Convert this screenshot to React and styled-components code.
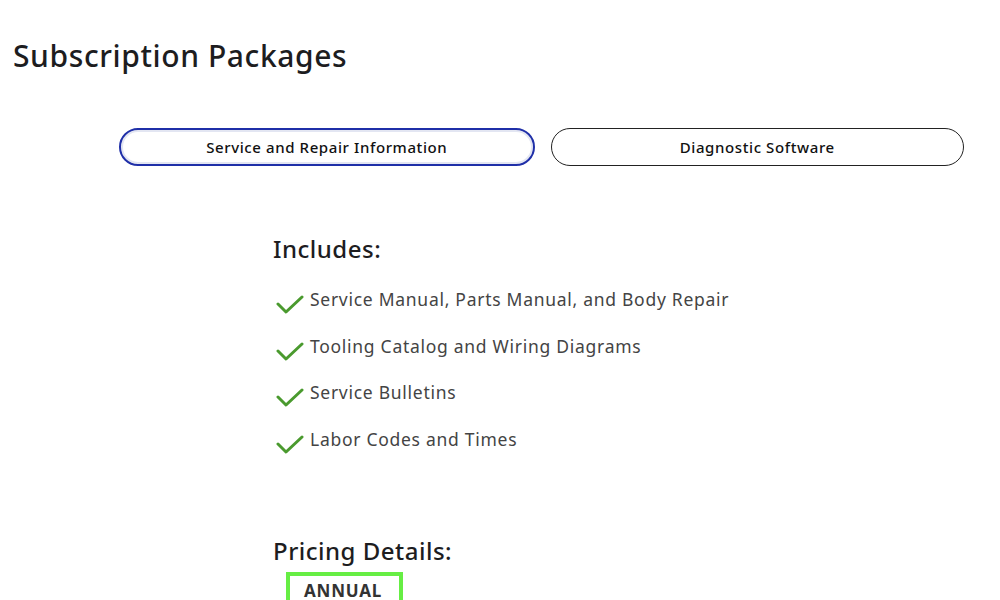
import React from "react";
import styled, { createGlobalStyle } from "styled-components";

const GlobalStyle = createGlobalStyle`
  body {
    margin: 0;
    background: #ffffff;
    font-family: "Noto Sans", "Liberation Sans", sans-serif;
    color: #1a1a1a;
  }
`;

const Page = styled.div`
  width: 1000px;
  height: 600px;
  overflow: hidden;
  padding: 38px 0 0 13px;
  box-sizing: border-box;
`;

const Title = styled.h1`
  margin: 0;
  font-size: 30px;
  font-weight: 500;
  color: #1d1d1f;
  letter-spacing: 0.6px;
  line-height: 36px;
`;

const Tabs = styled.div`
  display: flex;
  gap: 16px;
  margin: 54px 0 0 106px;
  width: 845px;
`;

const Tab = styled.button`
  flex: 1;
  height: 38px;
  border-radius: 19px;
  background: #fff;
  font-family: inherit;
  font-size: 15px;
  font-weight: 500;
  letter-spacing: 0.6px;
  color: #111;
  cursor: pointer;
  border: ${(p) => (p.$active ? "2px solid #1f2fa8" : "1px solid #222")};
  box-shadow: ${(p) => (p.$active ? "inset 0 0 0 2px #e3e6f2" : "none")};
`;

const Content = styled.div`
  margin: 68px 0 0 260px;
`;

const SectionTitle = styled.h2`
  margin: 0;
  font-size: 24px;
  font-weight: 500;
  color: #1d1d1f;
  letter-spacing: 0.5px;
  line-height: 30px;
`;

const List = styled.ul`
  list-style: none;
  margin: 23px 0 0 0;
  padding: 0;
  display: flex;
  flex-direction: column;
  gap: 19.5px;
`;

const Item = styled.li`
  display: flex;
  align-items: flex-start;
  height: 27px;
  font-size: 17.5px;
  color: #444;
  letter-spacing: 0.72px;
`;

const Check = styled.svg`
  width: 28px;
  height: 22px;
  margin: 6px 6px 0 3px;
  flex-shrink: 0;
`;

const Pricing = styled.div`
  margin-top: 82px;
`;

const Badge = styled.div`
  display: inline-block;
  margin: 6px 0 0 13px;
  padding: 5px 17px 5px 14px;
  border: 4px solid #66ee44;
  font-size: 17px;
  line-height: 20px;
  font-weight: 700;
  color: #333;
  letter-spacing: 0.8px;
`;

const items = [
  "Service Manual, Parts Manual, and Body Repair",
  "Tooling Catalog and Wiring Diagrams",
  "Service Bulletins",
  "Labor Codes and Times",
];

export default function App() {
  return (
    <>
      <GlobalStyle />
      <Page>
        <Title>Subscription Packages</Title>
        <Tabs>
          <Tab $active>Service and Repair Information</Tab>
          <Tab>Diagnostic Software</Tab>
        </Tabs>
        <Content>
          <SectionTitle>Includes:</SectionTitle>
          <List>
            {items.map((t) => (
              <Item key={t}>
                <Check viewBox="0 0 28 22">
                  <path
                    d="M2 11 L10 19 L26 4"
                    fill="none"
                    stroke="#4a9a2e"
                    strokeWidth="3"
                    strokeLinecap="round"
                    strokeLinejoin="round"
                  />
                </Check>
                {t}
              </Item>
            ))}
          </List>
          <Pricing>
            <SectionTitle>Pricing Details:</SectionTitle>
            <Badge>ANNUAL</Badge>
          </Pricing>
        </Content>
      </Page>
    </>
  );
}
